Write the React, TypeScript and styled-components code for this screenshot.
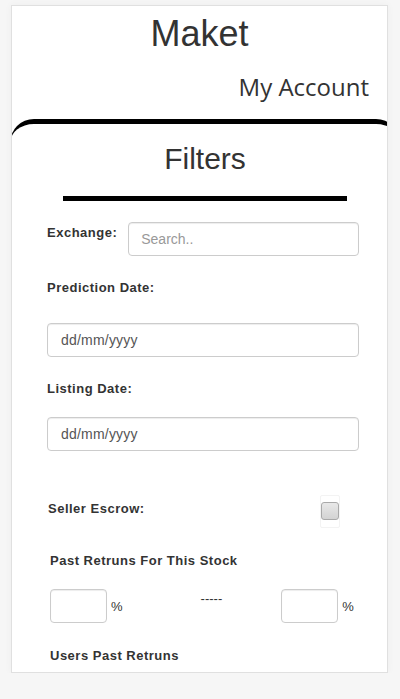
import React from "react";
import styled, { createGlobalStyle } from "styled-components";

const Global = createGlobalStyle`
  html, body { margin: 0; padding: 0; background: #f6f6f6; }
  body { font-family: "Liberation Sans", Arial, sans-serif; color: #333; }
  * { box-sizing: border-box; }
`;

const Card = styled.div`
  width: 377px;
  height: 668px;
  margin: 5px 0 0 11px;
  background: #fff;
  border: 1px solid #e0e0e0;
  box-shadow: 0 0 8px rgba(0, 0, 0, 0.04);
  overflow: hidden;
  display: flex;
  flex-direction: column;
`;

const Brand = styled.h1`
  margin: 8px 0 0;
  font-size: 36px;
  line-height: 40px;
  font-weight: 400;
  text-align: center;
  color: #333;
`;

const AccountBar = styled.div`
  display: flex;
  justify-content: flex-end;
  padding-right: 18px;
  margin-top: 17px;
`;

const AccountLink = styled.a`
  font-family: "Open Sans", sans-serif;
  font-size: 24px;
  line-height: 32px;
  font-weight: 500;
  color: #333;
  text-decoration: none;
`;

const Panel = styled.section`
  margin: 16px -13px 0 -2px;
  border-top: 5px solid #000;
  border-radius: 24px 24px 0 0;
  background: #fff;
  flex: 1;
`;

const PanelTitle = styled.h2`
  margin: 17px 0 0;
  font-size: 30px;
  line-height: 36px;
  font-weight: 400;
  text-align: center;
  color: #333;
`;

const Rule = styled.div`
  width: 284px;
  height: 5px;
  margin: 19px auto 0;
  background: #000;
`;

const Form = styled.div`
  padding: 0 41px 0 37px;
  display: flex;
  flex-direction: column;
`;

const Label = styled.label<{ $top?: number; $indent?: number }>`
  display: block;
  margin-top: ${(p) => p.$top ?? 0}px;
  margin-left: ${(p) => p.$indent ?? 0}px;
  font-size: 13px;
  line-height: 16px;
  font-weight: 700;
  letter-spacing: 0.5px;
  color: #333;
  white-space: nowrap;
`;

const Row = styled.div<{ $top: number }>`
  display: flex;
  align-items: flex-start;
  margin-top: ${(p) => p.$top}px;
`;

const TextInput = styled.input<{ $top?: number }>`
  display: block;
  width: 100%;
  height: 34px;
  margin-top: ${(p) => p.$top ?? 0}px;
  padding: 0 13px;
  border: 1px solid #ccc;
  border-radius: 4px;
  box-shadow: inset 0 1px 1px rgba(0, 0, 0, 0.075);
  font-family: "Liberation Sans", Arial, sans-serif;
  font-size: 14px;
  color: #555;
  background: #fff;
  outline: none;
  &::placeholder { color: #999; }
`;

const DateInput = styled(TextInput)`
  letter-spacing: 0.2px;
  &::placeholder { color: #555; }
`;

const SearchInput = styled(TextInput)`
  flex: 1;
  margin-left: 11px;
  padding-left: 12px;
`;

const CheckWrap = styled.div`
  width: 20px;
  height: 33px;
  margin-left: auto;
  margin-right: 19px;
  border: 1px solid #f3f3f3;
  border-radius: 2px;
  display: flex;
  justify-content: center;
  padding-top: 6px;
`;

const CheckBox = styled.span`
  display: block;
  width: 18px;
  height: 18px;
  margin: 0 -1px;
  border: 1px solid #a9a9a9;
  border-radius: 3px;
  background: linear-gradient(#e8e8e8, #d3d3d3);
`;

const SmallInput = styled(TextInput)`
  width: 57px;
  flex: none;
`;

const Percent = styled.span`
  margin: 10px 0 0 4px;
  font-size: 13px;
  line-height: 16px;
  color: #333;
`;

const Dashes = styled.span`
  margin: 2px 59px 0 78px;
  font-size: 13px;
  line-height: 16px;
  color: #333;
`;

const Group = styled.div<{ $indent?: number }>`
  display: flex;
  align-items: flex-start;
  margin-left: ${(p) => p.$indent ?? 0}px;
`;

export default function App() {
  return (
    <>
      <Global />
      <Card>
        <Brand>Maket</Brand>
        <AccountBar>
          <AccountLink href="#">My Account</AccountLink>
        </AccountBar>
        <Panel>
          <PanelTitle>Filters</PanelTitle>
          <Rule />
          <Form>
            <Row $top={21}>
              <Label $top={3}>Exchange:</Label>
              <SearchInput placeholder="Search.." />
            </Row>
            <Label $top={24}>Prediction Date:</Label>
            <DateInput $top={27} placeholder="dd/mm/yyyy" />
            <Label $top={24}>Listing Date:</Label>
            <DateInput $top={20} placeholder="dd/mm/yyyy" />
            <Row $top={44}>
              <Label $top={6} $indent={1}>Seller Escrow:</Label>
              <CheckWrap>
                <CheckBox />
              </CheckWrap>
            </Row>
            <Label $top={25} $indent={3}>Past Retruns For This Stock</Label>
            <Row $top={20}>
              <Group $indent={3}>
                <SmallInput />
                <Percent>%</Percent>
              </Group>
              <Dashes>-----</Dashes>
              <Group>
                <SmallInput />
                <Percent>%</Percent>
              </Group>
            </Row>
            <Label $top={25} $indent={3}>Users Past Retruns</Label>
          </Form>
        </Panel>
      </Card>
    </>
  );
}
